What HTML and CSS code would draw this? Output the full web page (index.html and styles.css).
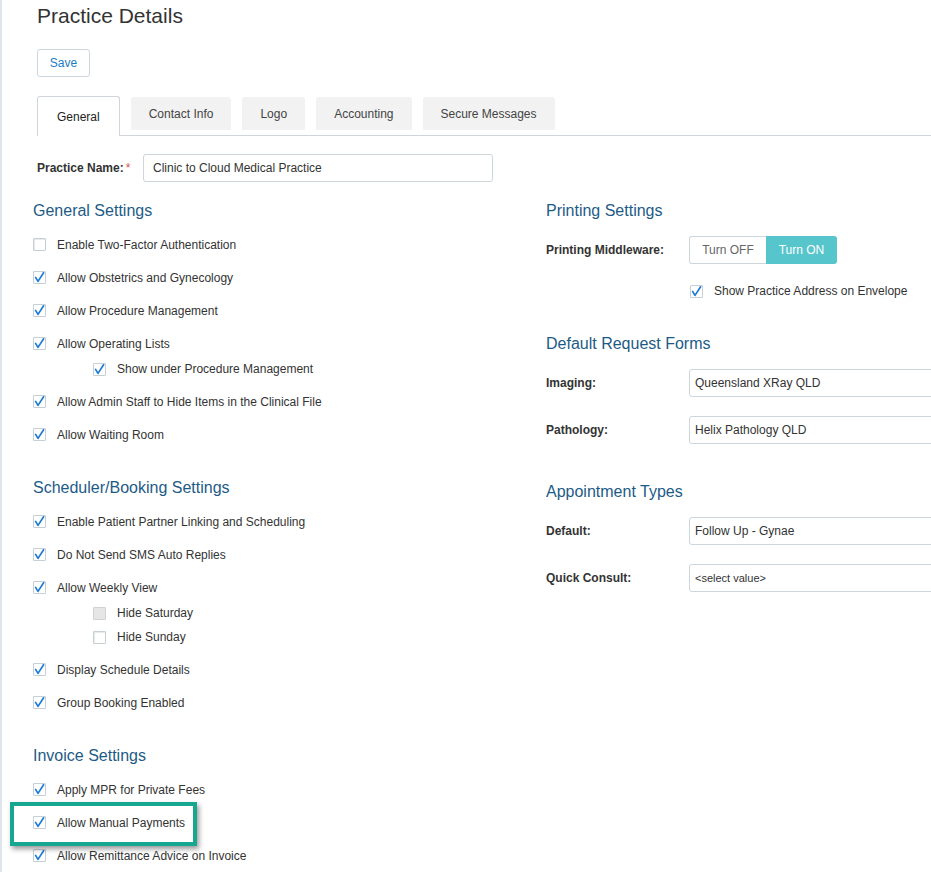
FILE: index.html
```html
<!DOCTYPE html>
<html>
<head>
<meta charset="utf-8">
<title>Practice Details</title>
<link rel="stylesheet" href="styles.css">
</head>
<body>
<div class="page">
  <div class="top">
    <h1 class="title">Practice Details</h1>
    <button class="btn">Save</button>
    <div class="tabs">
      <div class="tab active">General</div>
      <div class="tab">Contact Info</div>
      <div class="tab">Logo</div>
      <div class="tab">Accounting</div>
      <div class="tab">Secure Messages</div>
    </div>
    <div class="name-row">
      <label class="name-label">Practice Name:<span class="req">*</span></label>
      <div class="input name-input">Clinic to Cloud Medical Practice</div>
    </div>
  </div>

  <div class="columns">
    <div class="col-left">
      <section class="section">
        <h2 class="heading">General Settings</h2>
        <div class="check-row"><span class="cb"></span><span class="cl">Enable Two-Factor Authentication</span></div>
        <div class="check-row"><span class="cb on"><svg viewBox="0 0 13 13"><path d="M2.6 6.4 L5 10.4 L10.6 1.8"/></svg></span><span class="cl">Allow Obstetrics and Gynecology</span></div>
        <div class="check-row"><span class="cb on"><svg viewBox="0 0 13 13"><path d="M2.6 6.4 L5 10.4 L10.6 1.8"/></svg></span><span class="cl">Allow Procedure Management</span></div>
        <div class="check-row"><span class="cb on"><svg viewBox="0 0 13 13"><path d="M2.6 6.4 L5 10.4 L10.6 1.8"/></svg></span><span class="cl">Allow Operating Lists</span></div>
        <div class="sub-list">
          <div class="check-row sub"><span class="cb on"><svg viewBox="0 0 13 13"><path d="M2.6 6.4 L5 10.4 L10.6 1.8"/></svg></span><span class="cl">Show under Procedure Management</span></div>
        </div>
        <div class="check-row"><span class="cb on"><svg viewBox="0 0 13 13"><path d="M2.6 6.4 L5 10.4 L10.6 1.8"/></svg></span><span class="cl">Allow Admin Staff to Hide Items in the Clinical File</span></div>
        <div class="check-row"><span class="cb on"><svg viewBox="0 0 13 13"><path d="M2.6 6.4 L5 10.4 L10.6 1.8"/></svg></span><span class="cl">Allow Waiting Room</span></div>
      </section>

      <section class="section">
        <h2 class="heading">Scheduler/Booking Settings</h2>
        <div class="check-row"><span class="cb on"><svg viewBox="0 0 13 13"><path d="M2.6 6.4 L5 10.4 L10.6 1.8"/></svg></span><span class="cl">Enable Patient Partner Linking and Scheduling</span></div>
        <div class="check-row"><span class="cb on"><svg viewBox="0 0 13 13"><path d="M2.6 6.4 L5 10.4 L10.6 1.8"/></svg></span><span class="cl">Do Not Send SMS Auto Replies</span></div>
        <div class="check-row"><span class="cb on"><svg viewBox="0 0 13 13"><path d="M2.6 6.4 L5 10.4 L10.6 1.8"/></svg></span><span class="cl">Allow Weekly View</span></div>
        <div class="sub-list">
          <div class="check-row sub"><span class="cb disabled"></span><span class="cl">Hide Saturday</span></div>
          <div class="check-row sub"><span class="cb"></span><span class="cl">Hide Sunday</span></div>
        </div>
        <div class="check-row"><span class="cb on"><svg viewBox="0 0 13 13"><path d="M2.6 6.4 L5 10.4 L10.6 1.8"/></svg></span><span class="cl">Display Schedule Details</span></div>
        <div class="check-row"><span class="cb on"><svg viewBox="0 0 13 13"><path d="M2.6 6.4 L5 10.4 L10.6 1.8"/></svg></span><span class="cl">Group Booking Enabled</span></div>
      </section>

      <section class="section">
        <h2 class="heading">Invoice Settings</h2>
        <div class="check-row"><span class="cb on"><svg viewBox="0 0 13 13"><path d="M2.6 6.4 L5 10.4 L10.6 1.8"/></svg></span><span class="cl">Apply MPR for Private Fees</span></div>
        <div class="check-row marked"><span class="cb on"><svg viewBox="0 0 13 13"><path d="M2.6 6.4 L5 10.4 L10.6 1.8"/></svg></span><span class="cl">Allow Manual Payments</span><span class="highlight-box"></span></div>
        <div class="check-row"><span class="cb on"><svg viewBox="0 0 13 13"><path d="M2.6 6.4 L5 10.4 L10.6 1.8"/></svg></span><span class="cl">Allow Remittance Advice on Invoice</span></div>
      </section>
    </div>

    <div class="col-right">
      <section class="rsection">
        <h2 class="heading">Printing Settings</h2>
        <div class="form-row">
          <span class="flabel">Printing Middleware:</span>
          <div class="toggle"><span class="seg off">Turn OFF</span><span class="seg onseg">Turn ON</span></div>
        </div>
        <div class="check-row rcheck"><span class="cb on"><svg viewBox="0 0 13 13"><path d="M2.6 6.4 L5 10.4 L10.6 1.8"/></svg></span><span class="cl">Show Practice Address on Envelope</span></div>
      </section>

      <section class="rsection forms">
        <h2 class="heading">Default Request Forms</h2>
        <div class="form-row">
          <span class="flabel">Imaging:</span>
          <div class="input select">Queensland XRay QLD</div>
        </div>
        <div class="form-row">
          <span class="flabel">Pathology:</span>
          <div class="input select">Helix Pathology QLD</div>
        </div>
      </section>

      <section class="rsection appts">
        <h2 class="heading">Appointment Types</h2>
        <div class="form-row">
          <span class="flabel">Default:</span>
          <div class="input select">Follow Up - Gynae</div>
        </div>
        <div class="form-row">
          <span class="flabel">Quick Consult:</span>
          <div class="input select small">&lt;select value&gt;</div>
        </div>
      </section>
    </div>
  </div>
</div>
</body>
</html>
```

FILE: styles.css
```css
html, body {
  margin: 0;
  padding: 0;
  background: #fff;
}

body {
  font-family: "Liberation Sans", Arial, sans-serif;
  font-size: 12px;
  color: #333;
  overflow: hidden;
}

.page {
  border-left: 2px solid #dfe5eb;
  padding: 4px 0 0 31px;
  min-height: 868px;
}

.top {
  margin-left: 4px;
}

.title {
  margin: 0;
  font-size: 21px;
  font-weight: normal;
  line-height: 24px;
  color: #333;
}

.btn {
  display: block;
  margin-top: 21px;
  width: 53px;
  height: 28px;
  padding: 0;
  border: 1px solid #ccd6df;
  border-radius: 3px;
  background: #fff;
  color: #1a7dc4;
  font-family: "Liberation Sans", Arial, sans-serif;
  font-size: 12px;
}

.tabs {
  margin-top: 19px;
  display: flex;
  align-items: flex-start;
  gap: 11px;
  height: 39px;
  border-bottom: 1px solid #cfd5db;
}

.tab {
  height: 33px;
  margin-top: 1px;
  padding: 0 18px;
  background: #f2f2f2;
  border-radius: 3px 3px 0 0;
  display: flex;
  align-items: center;
  color: #444;
}

.tab.active {
  box-sizing: border-box;
  height: 40px;
  margin-top: 0;
  padding: 1px 19px 0;
  background: #fff;
  border: 1px solid #cfd5db;
  border-bottom: none;
  color: #222;
}

.name-row {
  margin-top: 18px;
  display: flex;
  align-items: center;
}

.name-label {
  width: 106px;
  font-weight: bold;
  color: #333;
}

.req {
  color: #d9534f;
  font-weight: normal;
  margin-left: 2px;
}

.input {
  box-sizing: border-box;
  height: 28px;
  border: 1px solid #cdd5dd;
  border-radius: 3px;
  background: #fff;
  display: flex;
  align-items: center;
  color: #333;
}

.name-input {
  width: 350px;
  padding-left: 9px;
}

.columns {
  margin-top: 19px;
  display: grid;
  grid-template-columns: 513px 1fr;
}

.col-right {
  overflow: hidden;
}

.heading {
  margin: 0 0 8px;
  font-size: 16px;
  line-height: 19px;
  font-weight: normal;
  color: #1d5b86;
}

.section {
  margin-bottom: 27px;
}

.check-row {
  height: 33px;
  display: flex;
  align-items: center;
  line-height: 14px;
}

.cb {
  box-sizing: border-box;
  width: 13px;
  height: 13px;
  flex: none;
  border: 1px solid #c6ced6;
  border-radius: 1px;
  background: #fff;
  box-shadow: inset 1px 1px 1px #e8e8e8;
  display: flex;
  margin-right: 11px;
}

.cb.on {
  box-shadow: none;
}

.cb svg {
  width: 13px;
  height: 13px;
  margin: -1px;
}

.cb svg path {
  fill: none;
  stroke: #1b7bd6;
  stroke-width: 1.7;
  stroke-linecap: round;
  stroke-linejoin: round;
}

.cb.disabled {
  background: #e6e6e6;
  border-color: #cdd2d6;
  box-shadow: none;
}

.sub-list {
  margin-top: -3px;
  margin-bottom: 4px;
}

.check-row.sub {
  height: 24px;
  padding-left: 60px;
}

.marked {
  position: relative;
}

.highlight-box {
  position: absolute;
  left: -23px;
  top: -4px;
  width: 187px;
  height: 44px;
  box-sizing: border-box;
  border: 4px solid #17a68f;
  box-shadow: 2px 3px 5px rgba(0, 0, 0, 0.4);
  pointer-events: none;
}

.rsection .heading {
  margin-bottom: 16px;
}

.form-row {
  height: 28px;
  display: flex;
  align-items: center;
}

.form-row + .form-row {
  margin-top: 19px;
}

.flabel {
  width: 143px;
  flex: none;
  font-weight: bold;
  color: #333;
}

.toggle {
  display: flex;
  height: 28px;
}

.seg {
  box-sizing: border-box;
  height: 28px;
  display: flex;
  align-items: center;
  justify-content: center;
}

.seg.off {
  width: 77px;
  border: 1px solid #cdd5dd;
  border-right: none;
  border-radius: 3px 0 0 3px;
  color: #666;
  background: #fff;
}

.seg.onseg {
  width: 71px;
  background: #56c5cc;
  color: #fff;
  border-radius: 0 3px 3px 0;
}

.rcheck {
  height: 20px;
  margin-top: 17px;
  padding-left: 144px;
}

.select {
  width: 320px;
  padding-left: 5px;
  flex: none;
}

.select.small {
  font-size: 11px;
}

.forms {
  margin-top: 33px;
}

.appts {
  margin-top: 38px;
}
```
